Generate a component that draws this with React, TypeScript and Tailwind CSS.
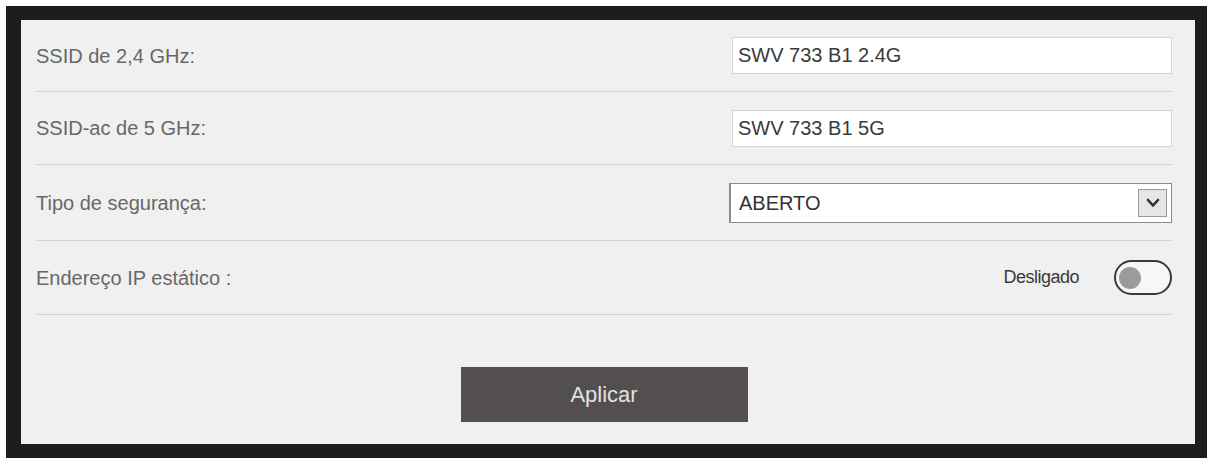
import React from 'react';

const Chevron: React.FC = () => (
  <svg width="16" height="12" viewBox="0 0 16 12" fill="none">
    <polyline points="3,3 8,8.5 13,3" stroke="#2e2e2e" strokeWidth="2.6" strokeLinecap="round" strokeLinejoin="round" />
  </svg>
);

const Row: React.FC<{ label: string; className: string; children: React.ReactNode }> = ({ label, className, children }) => (
  <div className={`flex items-center justify-between border-b border-[#d2d2d2] ${className}`}>
    <span className="text-[20px] text-[#686868]">{label}</span>
    {children}
  </div>
);

export default function App() {
  return (
    <div className="min-h-screen bg-white pl-[6px] pt-[6px]">
      <div className="h-[452px] w-[1201px] border-b-[14px] border-l-[15px] border-r-[12px] border-t-[14px] border-[#1d1d1d] bg-[#f0f0f0] pl-[15px] pr-[23px] font-['Liberation_Sans',Arial,sans-serif]">
        {/* SSID 2.4 GHz */}
        <Row label="SSID de 2,4 GHz:" className="h-[72px]">
          <input
            readOnly
            value="SWV 733 B1 2.4G"
            className="h-[37px] w-[440px] border border-[#d4d4d4] bg-white pl-[5px] text-[20px] text-[#3a3a3a] outline-none"
          />
        </Row>

        {/* SSID 5 GHz */}
        <Row label="SSID-ac de 5 GHz:" className="h-[73px]">
          <input
            readOnly
            value="SWV 733 B1 5G"
            className="h-[37px] w-[440px] border border-[#d4d4d4] bg-white pl-[5px] text-[20px] text-[#3a3a3a] outline-none"
          />
        </Row>

        {/* Security type */}
        <Row label="Tipo de segurança:" className="h-[76px]">
          <div className="flex h-[40px] w-[443px] items-center justify-between border border-l-2 border-[#8c8c8c] bg-white pl-[8px] pr-[4px]">
            <span className="text-[20px] text-[#333333]">ABERTO</span>
            <div className="flex h-[28px] w-[29px] items-center justify-center border border-[#9a9a9a] bg-[#e6e6e6]">
              <Chevron />
            </div>
          </div>
        </Row>

        {/* Static IP toggle */}
        <Row label="Endereço IP estático :" className="h-[74px]">
          <div className="flex items-center gap-[35px]">
            <span className="text-[18px] tracking-[-0.5px] text-[#3a3a3a]">Desligado</span>
            <div className="flex h-[35px] w-[58px] items-center rounded-full border-[2.5px] border-[#3a3a3a] bg-[#f7f7f7] pl-[3px]">
              <div className="h-[22px] w-[22px] rounded-full bg-[#9b9b9b]" />
            </div>
          </div>
        </Row>

        <div className="flex justify-center pt-[52px]">
          <button className="h-[55px] w-[287px] bg-[#534f50] text-[22px] text-[#e2e2e2]">Aplicar</button>
        </div>
      </div>
    </div>
  );
}
